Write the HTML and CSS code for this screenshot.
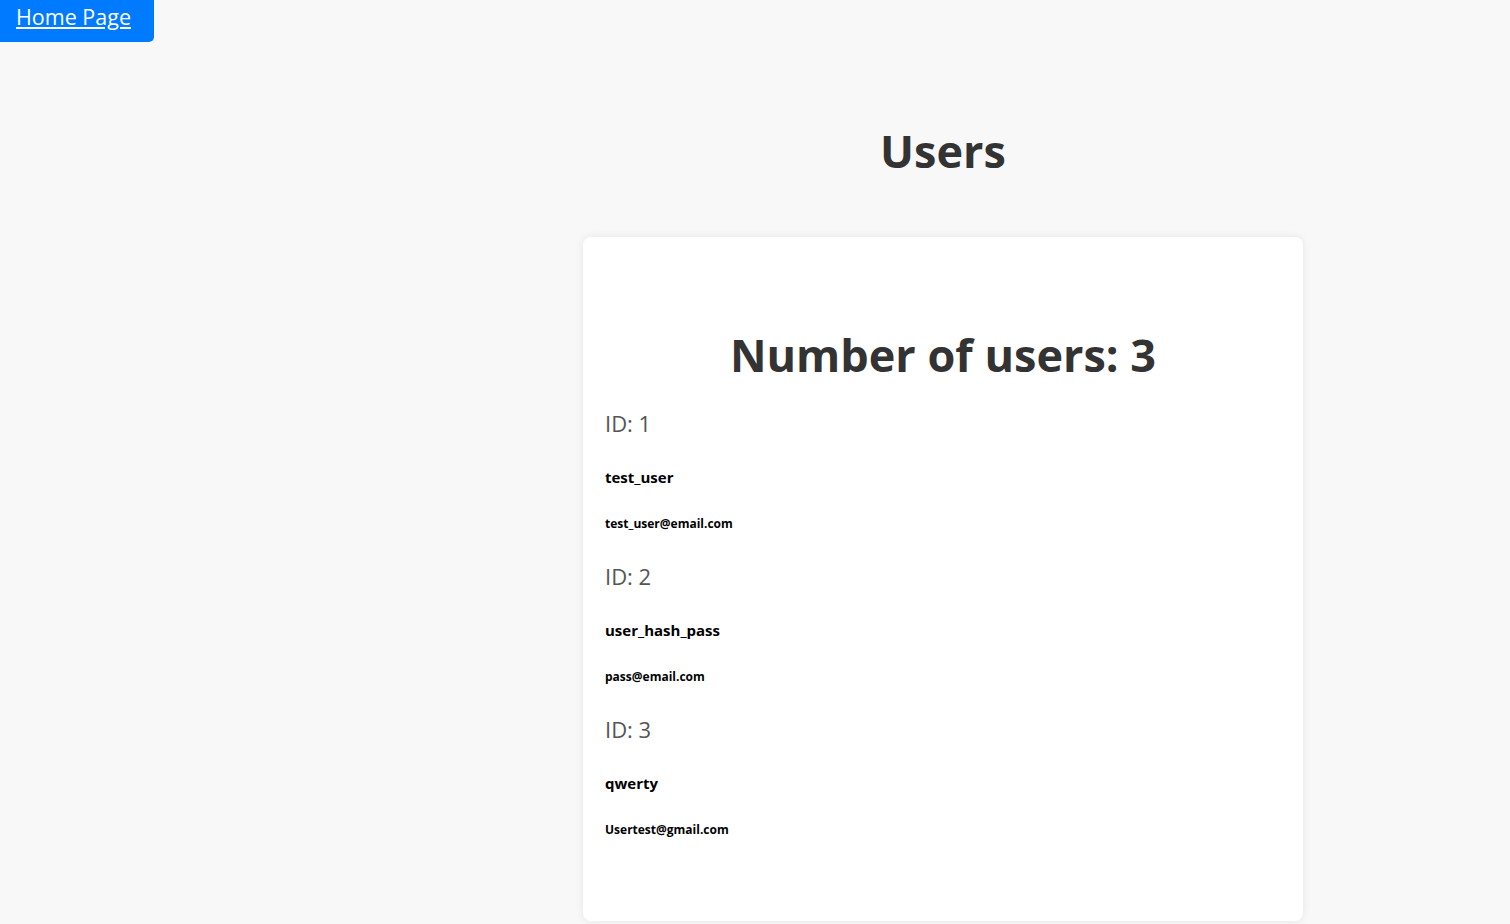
FILE: index.html
```html
<!DOCTYPE html>
<html>
<head>
<meta charset="utf-8">
<title>Users</title>
<link rel="stylesheet" href="styles.css">
</head>
<body>
<div class="topbar">
  <a class="home-link" href="#">Home Page</a>
</div>
<main class="main">
  <h1 class="page-title">Users</h1>
  <section class="card">
    <h2 class="count">Number of users: 3</h2>
    <div class="user">
      <p class="user-id">ID: 1</p>
      <p class="user-name">test_user</p>
      <p class="user-email">test_user@email.com</p>
    </div>
    <div class="user">
      <p class="user-id">ID: 2</p>
      <p class="user-name">user_hash_pass</p>
      <p class="user-email">pass@email.com</p>
    </div>
    <div class="user">
      <p class="user-id">ID: 3</p>
      <p class="user-name">qwerty</p>
      <p class="user-email">Usertest@gmail.com</p>
    </div>
  </section>
</main>
</body>
</html>
```

FILE: styles.css
```css
html, body {
  margin: 0;
  padding: 0;
}
body {
  background: #f8f8f8;
  font-family: "Open Sans", "Noto Sans", sans-serif;
  color: #333;
  min-height: 924px;
}
.topbar {
  display: flex;
}
.home-link {
  display: block;
  width: 154px;
  height: 42px;
  box-sizing: border-box;
  padding: 2px 0 0 16px;
  background: #007bff;
  color: #fff;
  font-size: 21.5px;
  line-height: 30px;
  text-decoration: underline;
  border-bottom-right-radius: 5px;
}
.main {
  margin-left: 583px;
  width: 720px;
  display: flex;
  flex-direction: column;
}
.page-title {
  margin: 79px 0 0;
  text-align: center;
  font-size: 45px;
  line-height: 60px;
  font-weight: 700;
  color: #333;
}
.card {
  margin-top: 56px;
  background: #fff;
  border-radius: 8px;
  box-shadow: 0 0 8px rgba(0,0,0,0.08);
  padding: 88px 22px 60px;
  height: 684px;
  box-sizing: border-box;
}
.count {
  margin: 0 0 22.5px;
  text-align: center;
  font-size: 45px;
  line-height: 60px;
  font-weight: 700;
  color: #333;
}
.user-id {
  margin: 0;
  font-size: 22px;
  line-height: 30px;
  font-weight: 400;
  color: #555;
}
.user-name {
  margin: 29px 0 0;
  font-size: 15px;
  line-height: 20px;
  font-weight: 700;
  color: #000;
}
.user-email {
  margin: 29.5px 0 0;
  font-size: 12px;
  line-height: 16px;
  font-weight: 700;
  color: #000;
}
.user + .user {
  margin-top: 28.5px;
}
```
